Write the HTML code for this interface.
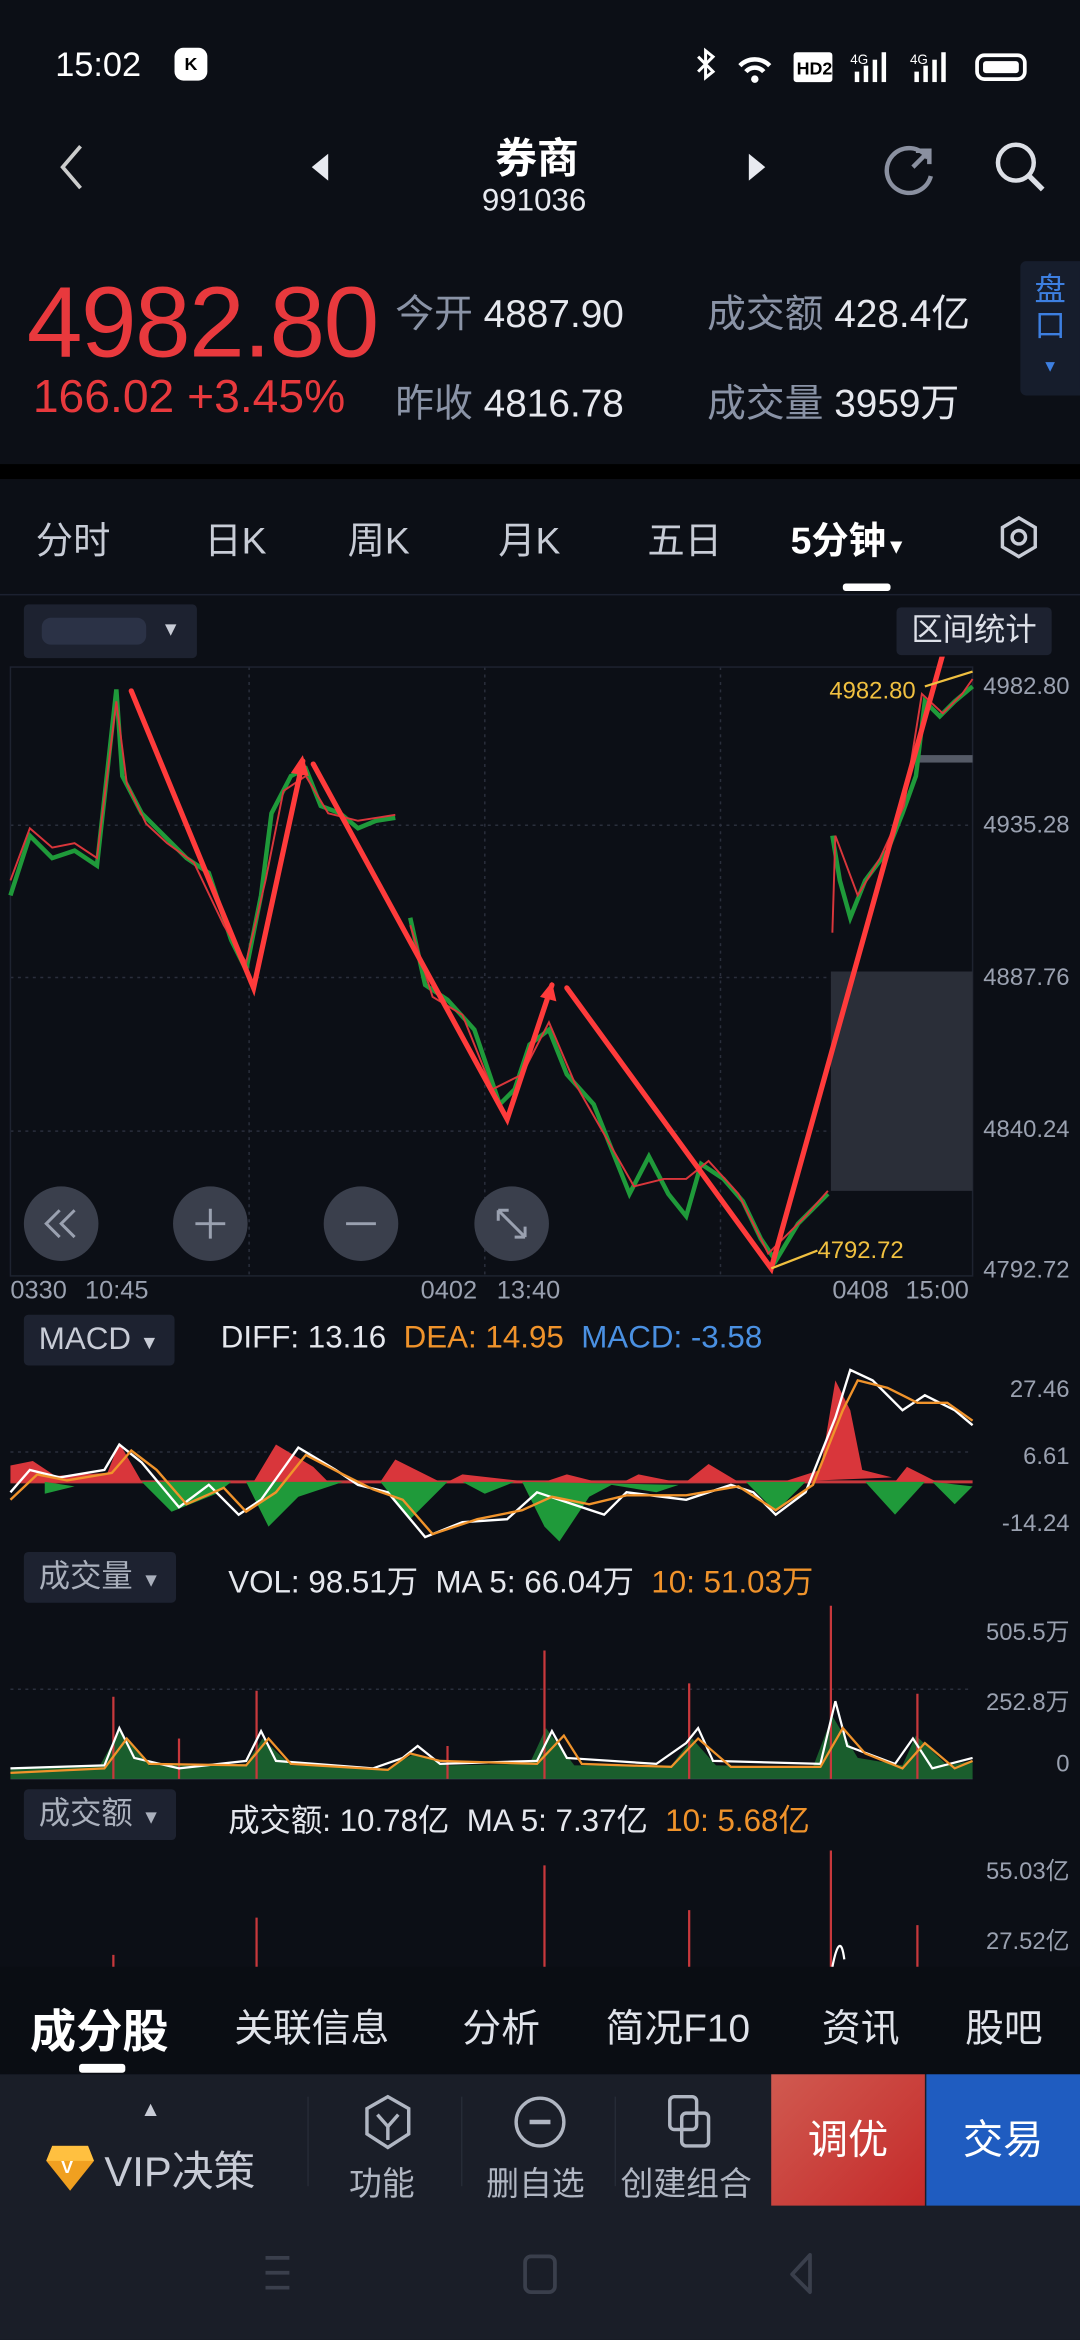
<!DOCTYPE html>
<html><head><meta charset="utf-8"><style>
html,body{margin:0;padding:0;background:#0c0f16;width:1080px;height:2340px;overflow:hidden}
#w{position:absolute;left:0;top:0;width:724px;height:1568px;transform:scale(1.49171,1.4923);transform-origin:0 0;font-family:"Liberation Sans","Noto Sans CJK SC",sans-serif;color:#e6e8ee}
.a{position:absolute;white-space:nowrap}
.g{color:#8a93a6}
.tab{position:absolute;top:343px;font-size:25px;color:#c8ccd6}
.btn{position:absolute;background:#1d2230;border-radius:3px;font-size:20px;color:#c8ccd6;height:34px;line-height:34px;padding:0 10px}
.ax{position:absolute;right:7px;font-size:16px;color:#9aa1b0}
</style></head><body><div id="w">
<div class="a" style="left:37px;top:30px;font-size:23px;color:#fff">15:02</div>
<div class="a" style="left:117px;top:32px;width:22px;height:22px;border-radius:6px;background:#fff;color:#000;font-size:12px;text-align:center;line-height:22px;font-weight:bold">K</div>
<svg class="a" style="left:460px;top:30px" width="230" height="30" viewBox="0 0 230 30">
<path d="M8 8l10 10-5 4V4l5 4-10 10" stroke="#fff" stroke-width="2" fill="none"/>
<path d="M36 14a14 14 0 0 1 20 0M40 18a8 8 0 0 1 12 0" stroke="#fff" stroke-width="3" fill="none"/><circle cx="46" cy="23" r="2.5" fill="#fff"/>
<rect x="72" y="5" width="26" height="20" rx="2" fill="#fff"/><text x="74" y="20" font-size="12" font-weight="bold" fill="#000" font-family="Liberation Sans">HD2</text>
<text x="110" y="13" font-size="9" fill="#fff">4G</text><rect x="113" y="18" width="3" height="7" fill="#fff"/><rect x="119" y="14" width="3" height="11" fill="#fff"/><rect x="125" y="10" width="3" height="15" fill="#fff"/><rect x="131" y="5" width="3" height="20" fill="#fff"/>
<text x="150" y="13" font-size="9" fill="#fff">4G</text><rect x="153" y="18" width="3" height="7" fill="#fff"/><rect x="159" y="14" width="3" height="11" fill="#fff"/><rect x="165" y="10" width="3" height="15" fill="#fff"/><rect x="171" y="5" width="3" height="20" fill="#fff"/>
<rect x="195" y="7" width="32" height="16" rx="5" stroke="#fff" stroke-width="2.5" fill="none"/><rect x="199" y="11" width="24" height="8" rx="2" fill="#fff"/>
</svg>
<svg class="a" style="left:38px;top:95px" width="20" height="34"><path d="M16 3L4 17l12 14" stroke="#ccc" stroke-width="2.5" fill="none"/></svg>
<svg class="a" style="left:206px;top:101px" width="16" height="22"><path d="M14 2L3 11l11 9z" fill="#e8eaf0"/></svg>
<svg class="a" style="left:500px;top:101px" width="16" height="22"><path d="M2 2l11 9-11 9z" fill="#e8eaf0"/></svg>
<div class="a" style="left:332px;top:85px;font-size:28px;font-weight:bold;color:#fff">券商</div>
<div class="a" style="left:323px;top:123px;font-size:21px;color:#e8eaf0">991036</div>
<svg class="a" style="left:590px;top:92px" width="42" height="42"><path d="M32 14A15 15 0 1 0 34 26" stroke="#8a90a0" stroke-width="3" fill="none"/><path d="M22 20l10-10M24 9h9v9" stroke="#8a90a0" stroke-width="3" fill="none"/></svg>
<svg class="a" style="left:664px;top:92px" width="40" height="40"><circle cx="17" cy="17" r="12" stroke="#dcdfe6" stroke-width="3" fill="none"/><path d="M26 26l9 9" stroke="#dcdfe6" stroke-width="3.5"/></svg>
<div class="a" style="left:18px;top:178px;font-size:67px;color:#e8393d;letter-spacing:-1px">4982.80</div>
<div class="a" style="left:22px;top:248px;font-size:31px;color:#e8393d">166.02 +3.45%</div>
<div class="a" style="left:265px;top:190px;font-size:26px"><span class="g">今开</span> 4887.90</div>
<div class="a" style="left:265px;top:250px;font-size:26px"><span class="g">昨收</span> 4816.78</div>
<div class="a" style="left:474px;top:190px;font-size:26px"><span class="g">成交额</span> 428.4亿</div>
<div class="a" style="left:474px;top:250px;font-size:26px"><span class="g">成交量</span> 3959万</div>
<div class="a" style="left:684px;top:175px;width:40px;height:90px;background:#161d2c;border-radius:4px 0 0 4px;color:#3d7fe0;font-size:21px;text-align:center;line-height:24px;padding-top:8px;box-sizing:border-box">盘<br>口<br><span style="font-size:11px">▼</span></div>
<div class="a" style="left:0;top:311px;width:724px;height:10px;background:#000"></div>
<div class="tab" style="left:24px">分时</div><div class="tab" style="left:137px">日K</div><div class="tab" style="left:233px">周K</div><div class="tab" style="left:334px">月K</div><div class="tab" style="left:434px">五日</div>
<div class="tab" style="left:530px;color:#fff;font-weight:bold">5分钟<span style="font-size:14px">▼</span></div>
<div class="a" style="left:565px;top:391px;width:32px;height:5px;background:#fff;border-radius:2px"></div>
<svg class="a" style="left:667px;top:344px" width="32" height="32"><path d="M16 3l11 6.5v13L16 29 5 22.5v-13z" stroke="#c8ccd6" stroke-width="2.3" fill="none"/><circle cx="16" cy="16" r="4.5" stroke="#c8ccd6" stroke-width="2.3" fill="none"/></svg>
<div class="a" style="left:0;top:398px;width:724px;height:1px;background:#1c2130"></div>
<div class="a" style="left:16px;top:405px;width:116px;height:36px;background:#1d2230;border-radius:3px"></div>
<div class="a" style="left:28px;top:414px;width:70px;height:18px;background:#2b3246;border-radius:6px"></div>
<div class="a" style="left:108px;top:414px;font-size:13px;color:#c8ccd6">▼</div>
<div class="btn" style="left:601px;top:407px;height:32px;line-height:32px;padding:0 10px;font-size:21px;color:#dde0e8">区间统计</div>
<svg class="a" style="left:0;top:440px" width="724" height="440" viewBox="0 440 724 440">
<g stroke="#2a2f3c" stroke-dasharray="2 3" stroke-width="1"><line x1="7" y1="553" x2="652" y2="553"/><line x1="7" y1="655" x2="652" y2="655"/><line x1="7" y1="758" x2="652" y2="758"/><line x1="167" y1="447" x2="167" y2="855"/><line x1="325" y1="447" x2="325" y2="855"/><line x1="483" y1="447" x2="483" y2="855"/></g>
<rect x="7" y="447" width="645" height="408" fill="none" stroke="#1e2330"/>
<rect x="557" y="651" width="95" height="147" fill="#2a2e38"/>
<rect x="612" y="506" width="40" height="5" fill="#555a66"/>
<polyline fill="none" stroke="#1f9a3a" stroke-width="3" points="7,600 20,560 35,575 50,570 65,580 78,462 82,520 95,545 110,560 125,575 140,585 155,630 165,650 175,600 182,545 195,520 205,515 215,540 228,545 240,555 252,550 265,548"/>
<polyline fill="none" stroke="#d9363b" stroke-width="1.3" points="7,590 20,555 35,568 50,565 65,575 78,470 85,525 98,552 112,565 130,578 150,620 165,645 178,590 190,530 205,520 220,545 240,550 265,546"/>
<polyline fill="none" stroke="#1f9a3a" stroke-width="3" points="275,615 285,660 300,670 318,690 335,740 345,730 355,700 368,690 380,720 398,740 410,770 422,800 435,775 448,800 460,815 470,780 485,790 498,805 510,830 520,845 535,820 555,800"/>
<polyline fill="none" stroke="#d9363b" stroke-width="1.3" points="275,620 290,668 310,680 330,730 350,720 368,685 385,725 405,760 425,795 445,790 460,790 475,778 495,800 515,840 540,815 555,798"/>
<polyline fill="none" stroke="#1f9a3a" stroke-width="3" points="558,560 563,590 570,615 580,590 595,570 605,545 614,520 620,470 630,480 640,470 652,460"/>
<polyline fill="none" stroke="#d9363b" stroke-width="1.3" points="558,625 560,560 575,600 590,575 606,540 618,465 632,478 645,465 652,455"/>
<g stroke="#ff3b3b" stroke-width="3.5" fill="none" stroke-linecap="round"><path d="M88 463L170 662L203 510"/><path d="M210 512L340 750L370 660"/><path d="M380 662L517 850L645 392"/></g>
<path d="M195 518l8-12 4 14z M362 668l8-10 3 13z M640 398l8-14 3 16z" fill="#ff3b3b"/>
<line x1="517" y1="850" x2="548" y2="838" stroke="#f0c040" stroke-width="1.5"/><line x1="620" y1="460" x2="652" y2="450" stroke="#f0c040" stroke-width="1.5"/>
<text x="548" y="843" font-size="16" fill="#f0c040" font-family="Liberation Sans">4792.72</text>
<text x="556" y="468" font-size="16" fill="#f0c040" font-family="Liberation Sans">4982.80</text>
<g fill="#3a3f4c"><circle cx="41" cy="820" r="25"/><circle cx="141" cy="820" r="25"/><circle cx="242" cy="820" r="25"/><circle cx="343" cy="820" r="25"/></g>
<g stroke="#9aa1b0" stroke-width="2" fill="none"><path d="M40 811l-9 9 9 9M50 811l-9 9 9 9"/><path d="M131 820h20M141 810v20"/><path d="M232 820h20"/><path d="M334 811l18 18M334 811h7M334 811v7M352 829h-7M352 829v-7"/></g>
<g font-size="17" fill="#9aa1b0" font-family="Liberation Sans"><text x="7" y="870">0330</text><text x="57" y="870">10:45</text><text x="282" y="870">0402</text><text x="333" y="870">13:40</text><text x="558" y="870">0408</text><text x="607" y="870">15:00</text></g>
</svg>
<div class="ax" style="top:452px">4982.80</div><div class="ax" style="top:545px">4935.28</div><div class="ax" style="top:647px">4887.76</div><div class="ax" style="top:749px">4840.24</div><div class="ax" style="top:843px">4792.72</div>
<div class="btn" style="left:16px;top:881px;font-size:21px">MACD <span style="font-size:13px">▼</span></div>
<div class="a" style="left:148px;top:885px;font-size:21px">DIFF: 13.16 <span style="color:#f0932b">&nbsp;DEA: 14.95</span> <span style="color:#4a90e2">&nbsp;MACD: -3.58</span></div>
<svg class="a" style="left:0;top:910px" width="724" height="125" viewBox="0 910 724 125">
<line x1="7" y1="993" x2="652" y2="993" stroke="#c8383c" stroke-width="2"/>
<line x1="7" y1="973" x2="652" y2="973" stroke="#2a2f3c" stroke-dasharray="2 3"/>
<path d="M7 993V982l15-3 15 10 35-2 8-20 15 26z M170 993l15-25 25 15 10 10z M255 993l10-15 30 15z M300 993l10-5 45 5z M365 993l15-5 20 5z M418 993l10-5 25 5z M460 993l15-12 20 12z M525 993l25-8 10-60 10 20 8 40 20 5z M600 993l8-10 20 10z" fill="#d9363b"/>
<path d="M30 993v8l20-5z M95 993l20 20 30-12 10-8z M165 993l15 30 20-20 30-10z M255 993l20 25 25-25z M310 993l15 8 20-8z M350 993l15 30 10 10 20-30 15-8 30 5 15-5z M500 993l20 20 20-20z M580 993l20 22 20-22z M625 993l15 15 12-12z" fill="#1f9a3a"/>
<polyline fill="none" stroke="#fff" stroke-width="1.6" points="7,1000 20,985 40,990 70,985 80,968 95,980 120,1010 140,995 160,1015 175,1005 200,970 225,985 240,995 260,1000 285,1030 310,1020 340,1018 360,1000 390,1010 405,1015 420,1000 460,1005 490,995 505,1000 520,1015 540,1000 560,950 570,918 585,925 605,945 620,935 640,945 652,955"/>
<polyline fill="none" stroke="#f0932b" stroke-width="1.6" points="7,1005 25,988 45,992 75,987 88,972 105,985 125,1008 150,997 165,1013 185,1000 205,975 230,988 250,998 270,1005 290,1028 320,1018 350,1012 370,1003 395,1008 420,1002 460,1002 495,996 520,1012 545,995 565,945 575,925 595,930 615,940 635,940 652,952"/>
</svg>
<div class="ax" style="top:923px">27.46</div><div class="ax" style="top:968px">6.61</div><div class="ax" style="top:1013px">-14.24</div>
<div class="btn" style="left:16px;top:1040px;font-size:21px;color:#aab0bc">成交量 <span style="font-size:13px">▼</span></div>
<div class="a" style="left:153px;top:1044px;font-size:21px">VOL: 98.51万 &nbsp;MA 5: 66.04万 <span style="color:#f0932b">&nbsp;10: 51.03万</span></div>
<svg class="a" style="left:0;top:1070px" width="724" height="130" viewBox="0 1070 724 130">
<line x1="7" y1="1132" x2="652" y2="1132" stroke="#2a2f3c" stroke-dasharray="2 3"/>
<line x1="7" y1="1192" x2="652" y2="1192" stroke="#2a2f3c"/>
<path d="M7 1192V1185L67 1183L80 1160L100 1183L165 1182L176 1165L195 1183L260 1185L278 1175L300 1183L355 1182L366 1158L385 1183L450 1183L464 1165L480 1183L545 1184L558 1150L575 1178L605 1183L614 1163L635 1183L652 1180V1192Z" fill="#1f7a35" opacity="0.75"/>
<g stroke="#c8383c" stroke-width="1.5"><line x1="76" y1="1192" x2="76" y2="1137"/><line x1="172" y1="1192" x2="172" y2="1133"/><line x1="365" y1="1192" x2="365" y2="1106"/><line x1="462" y1="1192" x2="462" y2="1128"/><line x1="557" y1="1192" x2="557" y2="1076"/><line x1="615" y1="1192" x2="615" y2="1135"/><line x1="120" y1="1192" x2="120" y2="1165"/><line x1="300" y1="1192" x2="300" y2="1170"/></g>
<polyline fill="none" stroke="#fff" stroke-width="1.5" points="7,1185 70,1183 80,1158 90,1178 120,1185 165,1180 175,1160 185,1180 250,1185 270,1178 280,1170 295,1182 360,1180 370,1160 380,1178 440,1182 460,1168 468,1158 478,1180 550,1182 560,1140 568,1170 600,1182 612,1165 625,1185 652,1178"/>
<polyline fill="none" stroke="#f0932b" stroke-width="1.5" points="7,1188 70,1185 85,1165 100,1182 165,1183 180,1165 195,1182 260,1186 275,1175 295,1180 360,1182 378,1163 390,1182 450,1184 468,1165 490,1184 550,1184 565,1158 580,1175 605,1185 620,1168 640,1185 652,1180"/>
</svg>
<div class="ax" style="top:1080px">505.5万</div><div class="ax" style="top:1127px">252.8万</div><div class="ax" style="top:1174px">0</div>
<div class="btn" style="left:16px;top:1199px;font-size:21px;color:#aab0bc">成交额 <span style="font-size:13px">▼</span></div>
<div class="a" style="left:153px;top:1204px;font-size:21px">成交额: 10.78亿 &nbsp;MA 5: 7.37亿 <span style="color:#f0932b">&nbsp;10: 5.68亿</span></div>
<svg class="a" style="left:0;top:1236px" width="724" height="84" viewBox="0 1236 724 84">
<g stroke="#c8383c" stroke-width="1.5"><line x1="76" y1="1318" x2="76" y2="1310"/><line x1="172" y1="1318" x2="172" y2="1285"/><line x1="365" y1="1318" x2="365" y2="1250"/><line x1="462" y1="1318" x2="462" y2="1280"/><line x1="557" y1="1318" x2="557" y2="1240"/><line x1="615" y1="1318" x2="615" y2="1290"/></g>
<path d="M558 1318c3-15 6-20 8-5" stroke="#fff" stroke-width="1.5" fill="none"/>
</svg>
<div class="ax" style="top:1240px">55.03亿</div><div class="ax" style="top:1287px">27.52亿</div>
<div class="a" style="left:0;top:1318px;width:724px;height:72px;background:#0a0d13"></div>
<div class="a" style="left:20px;top:1336px;font-size:31px;font-weight:bold;color:#fff">成分股</div>
<div class="a" style="left:157px;top:1339px;font-size:26px;color:#e0e3ea">关联信息</div>
<div class="a" style="left:310px;top:1339px;font-size:26px;color:#e0e3ea">分析</div>
<div class="a" style="left:406px;top:1339px;font-size:26px;color:#e0e3ea">简况F10</div>
<div class="a" style="left:551px;top:1339px;font-size:26px;color:#e0e3ea">资讯</div>
<div class="a" style="left:647px;top:1339px;font-size:26px;color:#e0e3ea">股吧</div>
<div class="a" style="left:53px;top:1383px;width:31px;height:6px;background:#fff;border-radius:2px"></div>
<div class="a" style="left:0;top:1390px;width:724px;height:178px;background:#1a1e28"></div>
<div class="a" style="left:94px;top:1405px;font-size:14px;color:#c8ccd6">▲</div>
<svg class="a" style="left:30px;top:1434px" width="34" height="36"><path d="M5 4h24l4 10-16 20L1 14z" fill="#f0a020"/><path d="M5 4h24l4 10H1z" fill="#ffc040"/><text x="11" y="22" font-size="12" fill="#fff" font-weight="bold">V</text></svg>
<div class="a" style="left:70px;top:1434px;font-size:28px;color:#c8ccd6">VIP决策</div>
<div class="a" style="left:206px;top:1405px;width:1px;height:60px;background:#262b36"></div>
<div class="a" style="left:309px;top:1405px;width:1px;height:60px;background:#262b36"></div>
<div class="a" style="left:412px;top:1405px;width:1px;height:60px;background:#262b36"></div>
<svg class="a" style="left:240px;top:1402px" width="40" height="40"><path d="M20 3l14 8v17l-14 9-14-9V11z" stroke="#b0b6c2" stroke-width="2.3" fill="none"/><path d="M13 15l7 8 7-8M20 23v9" stroke="#b0b6c2" stroke-width="2.3" fill="none"/></svg>
<div class="a" style="left:234px;top:1446px;font-size:22px;color:#b0b6c2">功能</div>
<svg class="a" style="left:342px;top:1402px" width="40" height="40"><circle cx="20" cy="20" r="16" stroke="#b0b6c2" stroke-width="2.3" fill="none"/><path d="M13 20h14" stroke="#b0b6c2" stroke-width="3"/></svg>
<div class="a" style="left:326px;top:1446px;font-size:22px;color:#b0b6c2">删自选</div>
<svg class="a" style="left:446px;top:1402px" width="36" height="40"><rect x="3" y="3" width="18" height="22" rx="3" stroke="#b0b6c2" stroke-width="2.3" fill="none"/><rect x="11" y="14" width="18" height="22" rx="3" stroke="#b0b6c2" stroke-width="2.3" fill="none"/></svg>
<div class="a" style="left:416px;top:1446px;font-size:22px;color:#b0b6c2">创建组合</div>
<div class="a" style="left:517px;top:1390px;width:103px;height:88px;background:linear-gradient(135deg,#d05a50,#c42a2a);color:#fff;font-size:27px;text-align:center;line-height:88px">调优</div>
<div class="a" style="left:621px;top:1390px;width:103px;height:88px;background:#1f5cc0;color:#fff;font-size:27px;text-align:center;line-height:88px">交易</div>
<svg class="a" style="left:170px;top:1505px" width="400" height="40"><path d="M8 8h16M8 18h16M8 28h16" stroke="#3a3f4c" stroke-width="2.5"/><rect x="182" y="7" width="20" height="24" rx="4" stroke="#3a3f4c" stroke-width="2.5" fill="none"/><path d="M373 6l-12 13 12 12z" stroke="#3a3f4c" stroke-width="2.5" fill="none" stroke-linejoin="round"/></svg>
</div></body></html>
